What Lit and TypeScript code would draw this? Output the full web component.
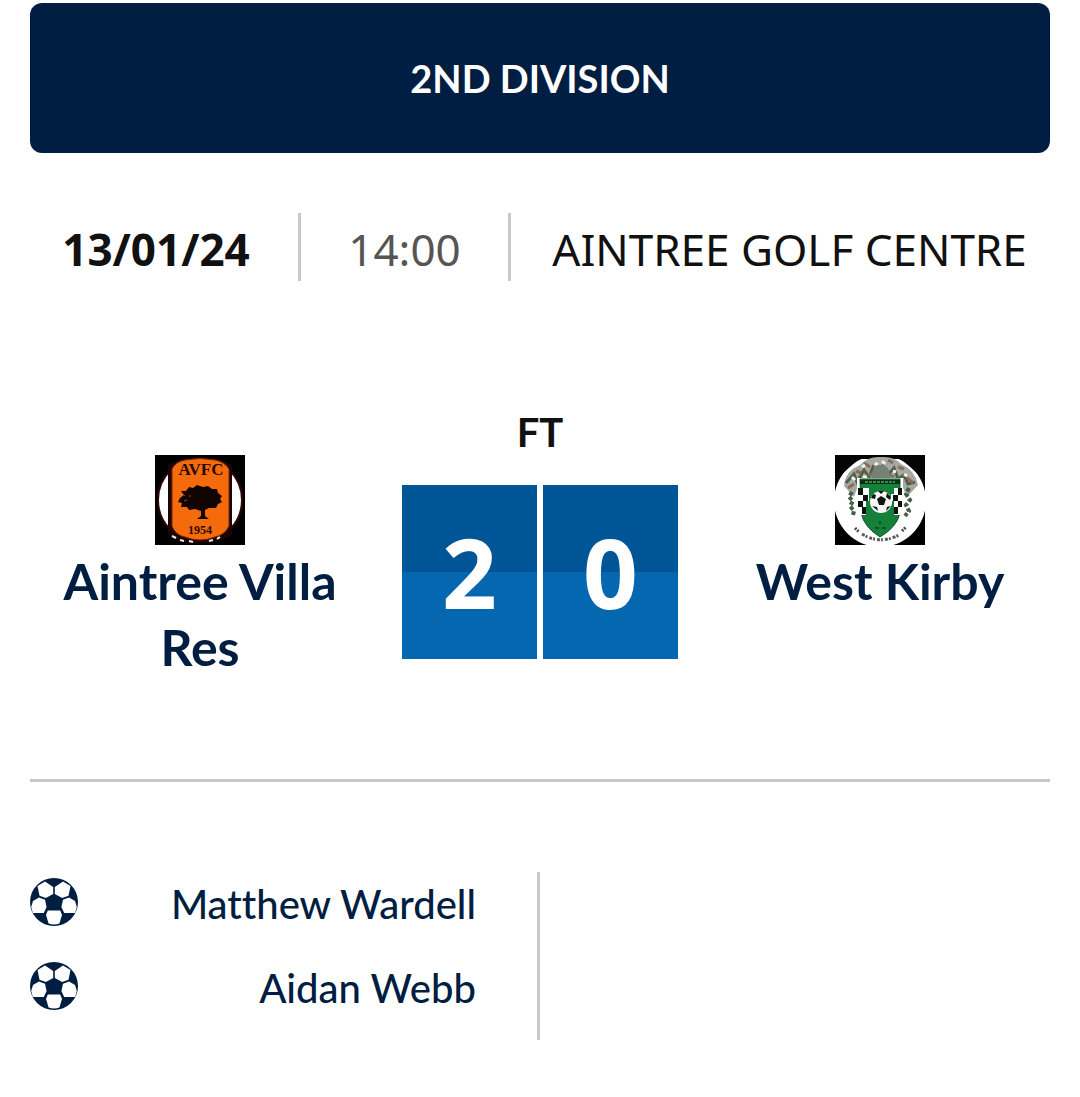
import { LitElement, css, html, svg } from 'lit';
import { customElement, property } from 'lit/decorators.js';

interface Team {
    name: string;
    score: number;
    scorers: string[];
}

interface Fixture {
    division: string;
    date: string;
    time: string;
    venue: string;
    status: string;
    home: Team;
    away: Team;
}

const fixture: Fixture = {
    division: '2ND DIVISION',
    date: '13/01/24',
    time: '14:00',
    venue: 'AINTREE GOLF CENTRE',
    status: 'FT',
    home: { name: 'Aintree Villa Res', score: 2, scorers: ['Matthew Wardell', 'Aidan Webb'] },
    away: { name: 'West Kirby', score: 0, scorers: [] }
};

// Home crest: orange panel with a tree on a white roundel
const homeCrest = svg`
    <rect width="90" height="90" fill="#000" />
    <circle cx="45" cy="45" r="42" fill="#fff" stroke="#2b0805" stroke-width="2" />
    <path d="M13 10 Q45 -6 77 10 V80 Q45 97 13 80Z" fill="#1c0603" />
    <path d="M17 14 Q20 7 30 5 Q45 2 60 5 Q70 7 74 14 V71 Q70 80 60 82 Q45 88 30 82 Q20 80 17 71Z" fill="#f56a0b" stroke="#7a2408" />
    <path d="M17 81 l4 2 M25 85 l4 1 M34 86 l4 1 M54 86 l4 -1 M62 84 l3 -2" stroke="#eee" stroke-width="2" />
    <text x="46" y="20" class="crest-text" font-size="17">AVFC</text>
    <path d="M25 43 l4 -3 -3 -4 5 0 3 -4 4 1 4 -3 6 2 5 -1 4 3 5 0 1 4 4 3 -2 3 2 3 -4 2 -2 4 -7 0 -4 2 0 6 4 3 -12 0 4 -3 0 -5 -6 -2 -6 1 -2 -3 -6 0 1 -4 -4 -1Z" fill="#120400" />
    <path d="M28 39 l2 2 M29 46 l3 -1 M34 41 l2 0" stroke="#a8420a" />
    <text x="45" y="79" class="crest-text" font-size="12">1954</text>
`;

// Away crest: green shield with a ball, mantling and helm above
const awayCrest = svg`
    <rect width="90" height="90" fill="#000" />
    <circle cx="45" cy="46" r="46" fill="#fff" />
    <path d="M0 0 H90 V30 L82 18 L66 4 H24 L8 18 L0 30Z" fill="#050505" />
    <path d="M9 31 Q10 16 25 10 Q33 1 46 2 Q59 1 66 9 Q80 15 83 30 L72 42 L66 28 L24 28 L19 42Z" fill="#a5aaa0" />
    <path d="M11 28 l8 -9 3 8 7 -12 5 7 4 -10 6 7 4 -8 5 9 6 -7 4 11 6 -4 4 9 7 -2" fill="none" stroke="#4f5f4c" stroke-width="3" />
    <path d="M13 33 l6 -4 M21 16 l5 2 M29 8 l6 4 M53 5 l5 3 M63 12 l6 2 M72 23 l6 5 M33 20 l8 -2 M51 18 l8 4" stroke="#8b6a5c" stroke-width="3" />
    <path d="M17 22 l3 3 M27 12 l3 -2 M40 8 l3 2 M47 6 l3 3 M58 16 l3 1 M69 19 l3 2 M28 22 h4 M63 25 h4" stroke="#f1f1ea" stroke-width="3" />
    <path d="M39 12 q7 -5 14 1 l3 10 h-20Z" fill="#778074" />
    <path d="M17 37 l-3 5 4 4 -3 5 4 5 -1 4 M74 33 l-3 6 4 6 -4 5 3 6 -4 5" fill="none" stroke="#485d49" stroke-width="4" stroke-dasharray="4 2" />
    <path d="M22 23 H68 V58 Q66 72 46 84 Q26 72 22 58Z" fill="#fff" />
    <path d="M25 24 H65 V58 Q62 72 45 82 Q29 72 26 58Z" fill="#148039" stroke="#174d28" />
    <path d="M25 27 H65" stroke="#082f13" stroke-width="4" />
    <path d="M30 27 H60" stroke="#3d864d" stroke-width="2" stroke-dasharray="3 1" />
    <path d="M23 33 h11 v13 h-3 v14 h-8Z M67 33 h-8 v6 h-3 v7 h3 v14 h8Z" fill="#fff" />
    <path d="M23 33 h5 v7 h-5Z M28 40 h5 v6 h-5Z M23 46 h5 v6 h-5Z M27 52 h4 v7 h-4Z M63 33 h4 v7 h-4Z M58 40 h5 v6 h-5Z M63 46 h4 v6 h-4Z M59 52 h4 v7 h-4Z" fill="#0b150e" />
    <circle cx="46" cy="47" r="11" fill="#f7f7f7" />
    <path d="M42 44 l4 -3 5 3 -2 6 -5 0Z M36 43 l2 -4 3 1 -1 4Z M52 38 l4 4 -1 3 -4 -3Z M37 51 l5 1 1 4Z M51 56 l1 -4 4 -1Z M43 36 h6 l-3 3Z" fill="#101512" />
    <path d="M45 66 v3 M40 73 h4 M47 73 h4" stroke="#0b5321" stroke-width="2" />
    <path d="M20 73 l4 4 M67 76 l4 -4" stroke="#465248" stroke-width="3" stroke-dasharray="2 1" />
    <path d="M27 79 Q45 90 64 80" fill="none" stroke="#59615a" stroke-width="3" stroke-dasharray="3 1 2 2" />
`;

@customElement('goal-icon')
export class GoalIcon extends LitElement {
    static override styles = css`
        :host {
            display: block;
            flex: none;
            width: 48px;
            height: 48px;
        }
        svg {
            display: block;
        }
    `;

    override render() {
        return html`
            <svg width="48" height="48" viewBox="0 0 48 48" role="img" aria-label="Goal">
                <circle cx="24" cy="24" r="24" fill="#001e41" />
                <g fill="#fff">
                    <path d="M7.5 8 L15 3.6 L23.2 9 V16 L15.8 20 L9.5 17.8Z" />
                    <path d="M40.5 8 L33 3.6 L24.8 9 V16 L32.2 20 L38.5 17.8Z" />
                    <path d="M3 23 L9 19.5 L15 21.7 L16.6 29 L13.8 35 H2.8 L1.2 29Z" />
                    <path d="M45 23 L39 19.5 L33 21.7 L31.4 29 L34.2 35 H45.2 L46.8 29Z" />
                    <path d="M17.8 32.6 H30.2 L32 37 L29.4 45.6 Q24 47.4 18.6 45.6 L16 37Z" />
                </g>
            </svg>
        `;
    }
}

@customElement('app-root')
export class AppRoot extends LitElement {
    @property({ type: Object })
    fixture: Fixture = fixture;

    static override styles = css`
        :host {
            --navy: #001e41;
            --ink: #111;
            --rule: #c8c8c8;
            --font-heading: Lato, sans-serif;
            --font-figures: 'Noto Sans', sans-serif;
            display: block;
            padding: 3px 30px 56px;
            background: #fff;
            color: var(--navy);
            font-family: var(--font-heading);
            font-variant-ligatures: none;
        }
        h1,
        h2,
        p,
        ul {
            margin: 0;
            padding: 0;
        }
        .division {
            padding: 48px 30px;
            border-radius: 12px;
            background: var(--navy);
            color: #fff;
            font-size: 38px;
            font-weight: 700;
            line-height: 54px;
            text-align: center;
        }
        .details {
            display: grid;
            grid-template-columns: 271fr 210fr 539fr;
            margin-top: 60px;
            color: var(--ink);
            font-family: var(--font-figures);
            font-size: 44px;
            line-height: 64px;
            white-space: nowrap;
        }
        .details > * {
            display: flex;
            justify-content: center;
            padding-top: 4px;
            border-right: 3px solid var(--rule);
        }
        .date {
            padding-right: 16px;
            font-weight: 700;
        }
        .time {
            color: #555;
        }
        .details .venue {
            padding-left: 18px;
            border-right: 0;
        }
        .match {
            display: grid;
            grid-template-columns: repeat(3, 1fr);
            margin-top: 124px;
            padding-bottom: 99px;
            border-bottom: 3px solid var(--rule);
            text-align: center;
        }
        .team {
            padding: 50px 30px 0;
        }
        .crest {
            display: block;
            margin: 0 auto 3px;
        }
        .crest-text {
            fill: #2a0b02;
            font-family: 'Liberation Serif', serif;
            font-weight: 700;
            text-anchor: middle;
        }
        .team h2 {
            font-size: 50px;
            font-weight: 700;
            line-height: 66px;
        }
        .status {
            margin-bottom: 26px;
            color: var(--ink);
            font-size: 40px;
            font-weight: 700;
            line-height: 54px;
        }
        .scores {
            display: flex;
            justify-content: center;
            gap: 6px;
        }
        .score {
            width: 135px;
            background: linear-gradient(#005596 50%, #0467b0 50%);
            color: #fff;
            font-family: var(--font-figures);
            font-size: 96px;
            font-weight: 700;
            line-height: 174px;
        }
        .scorers {
            display: grid;
            grid-template-columns: 1fr 1fr;
            margin-top: 90px;
        }
        .scorers ul {
            list-style: none;
        }
        .scorers .home {
            padding-right: 61px;
            border-right: 3px solid var(--rule);
        }
        .scorers li {
            display: flex;
            align-items: center;
            justify-content: space-between;
            padding-bottom: 24px;
            font-size: 40px;
            font-weight: 500;
            line-height: 56px;
        }
        .scorers span {
            padding-top: 4px;
        }
    `;

    override render() {
        const { division, date, time, venue, status, home, away } = this.fixture;

        return html`
            <h1 class="division">${division}</h1>
            <div class="details">
                <time class="date">${date}</time>
                <time class="time">${time}</time>
                <span class="venue">${venue}</span>
            </div>
            <section class="match">
                ${this._renderTeam(home, homeCrest)}
                <div>
                    <p class="status">${status}</p>
                    <div class="scores">
                        <span class="score">${home.score}</span>
                        <span class="score">${away.score}</span>
                    </div>
                </div>
                ${this._renderTeam(away, awayCrest)}
            </section>
            <section class="scorers">
                ${this._renderScorers(home, 'home')}
                ${this._renderScorers(away, 'away')}
            </section>
        `;
    }

    private _renderTeam(team: Team, crest: unknown) {
        return html`
            <div class="team">
                <svg class="crest" width="90" height="90" viewBox="0 0 90 90" aria-hidden="true">${crest}</svg>
                <h2>${team.name}</h2>
            </div>
        `;
    }

    private _renderScorers(team: Team, side: string) {
        return html`
            <ul class="${side}">
                ${team.scorers.map((scorer) => html`
                    <li><goal-icon></goal-icon><span>${scorer}</span></li>
                `)}
            </ul>
        `;
    }
}

declare global {
    interface HTMLElementTagNameMap {
        'app-root': AppRoot;
        'goal-icon': GoalIcon;
    }
}
